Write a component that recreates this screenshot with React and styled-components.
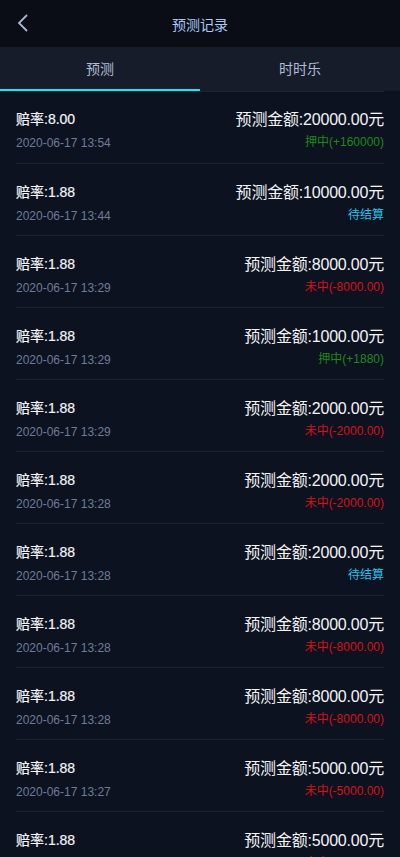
import React, { useState } from "react";
import styled, { createGlobalStyle } from "styled-components";

const Global = createGlobalStyle`
  html, body { margin: 0; padding: 0; background: #0d1220; }
  body { font-family: "Liberation Sans", Arial, "Noto Sans CJK SC", sans-serif; }
  * { box-sizing: border-box; }
`;

const Page = styled.div`
  width: 400px;
  min-height: 857px;
  background: #0d1220;
  overflow: hidden;
`;

const Header = styled.div`
  height: 47px;
  background: #0a0d16;
  display: flex;
  align-items: center;
  justify-content: center;
  position: relative;
`;

const Back = styled.button`
  position: absolute;
  left: 12px;
  top: 12px;
  width: 22px;
  height: 22px;
  padding: 0;
  border: none;
  background: none;
  display: flex;
  align-items: center;
  justify-content: center;
`;

const Title = styled.div`
  color: #a9c9f2;
  font-size: 14px;
`;

const Tabs = styled.div`
  display: flex;
  height: 44px;
  background: #161c2a;
`;

const Tab = styled.div`
  flex: 1;
  display: flex;
  align-items: center;
  justify-content: center;
  color: #aebcd6;
  font-size: 14px;
  padding-bottom: 3px;
  position: relative;
  &::after {
    content: "";
    position: absolute;
    left: 0;
    right: 0;
    bottom: 0;
    height: 2px;
    background: ${(p) => (p.$active ? "#1ee6f0" : "transparent")};
  }
`;

const List = styled.div`
  padding: 0 16px;
`;

const Row = styled.div`
  height: 72px;
  display: flex;
  justify-content: space-between;
  align-items: stretch;
  border-bottom: 1px solid #1c2331;
  padding-top: 18px;
  &:first-child {
    border-top: 1px solid #1c2331;
    height: 73px;
    padding-top: 17px;
  }
`;

const Col = styled.div`
  display: flex;
  flex-direction: column;
  align-items: ${(p) => (p.$right ? "flex-end" : "flex-start")};
`;

const Rate = styled.div`
  color: #f2f4f8;
  font-size: 14px;
  font-weight: normal;
  line-height: 20px;
  -webkit-text-stroke: 0.2px #f2f4f8;
`;

const Time = styled.div`
  color: #6e7c99;
  font-size: 12px;
  line-height: 14px;
  margin-top: 7px;
`;

const Amount = styled.div`
  color: #f2f4f8;
  font-size: 16px;
  line-height: 20px;
  margin-top: 1px;
  letter-spacing: -0.2px;
`;

const Status = styled.div`
  font-size: 12px;
  line-height: 14px;
  margin-top: 5px;
  color: ${(p) => (p.$kind === "win" ? "#1a8a1a" : p.$kind === "lose" ? "#d8101a" : "#1ec8f0")};
`;

const data = [
  ["8.00", "2020-06-17 13:54", "20000.00", "win", "押中(+160000)"],
  ["1.88", "2020-06-17 13:44", "10000.00", "wait", "待结算"],
  ["1.88", "2020-06-17 13:29", "8000.00", "lose", "未中(-8000.00)"],
  ["1.88", "2020-06-17 13:29", "1000.00", "win", "押中(+1880)"],
  ["1.88", "2020-06-17 13:29", "2000.00", "lose", "未中(-2000.00)"],
  ["1.88", "2020-06-17 13:28", "2000.00", "lose", "未中(-2000.00)"],
  ["1.88", "2020-06-17 13:28", "2000.00", "wait", "待结算"],
  ["1.88", "2020-06-17 13:28", "8000.00", "lose", "未中(-8000.00)"],
  ["1.88", "2020-06-17 13:28", "8000.00", "lose", "未中(-8000.00)"],
  ["1.88", "2020-06-17 13:27", "5000.00", "lose", "未中(-5000.00)"],
  ["1.88", "2020-06-17 13:27", "5000.00", "lose", "未中(-5000.00)"],
];

export default function App() {
  const [tab, setTab] = useState(0);
  return (
    <Page>
      <Global />
      <Header>
        <Back aria-label="back">
          <svg width="14" height="20" viewBox="0 0 14 20">
            <path d="M11 2 L3 10 L11 18" fill="none" stroke="#aab6cc" strokeWidth="1.8" />
          </svg>
        </Back>
        <Title>预测记录</Title>
      </Header>
      <Tabs>
        <Tab $active={tab === 0} onClick={() => setTab(0)}>预测</Tab>
        <Tab $active={tab === 1} onClick={() => setTab(1)}>时时乐</Tab>
      </Tabs>
      <List>
        {data.map((d, i) => (
          <Row key={i}>
            <Col>
              <Rate>赔率:{d[0]}</Rate>
              <Time>{d[1]}</Time>
            </Col>
            <Col $right>
              <Amount>预测金额:{d[2]}元</Amount>
              <Status $kind={d[3]}>{d[4]}</Status>
            </Col>
          </Row>
        ))}
      </List>
    </Page>
  );
}
